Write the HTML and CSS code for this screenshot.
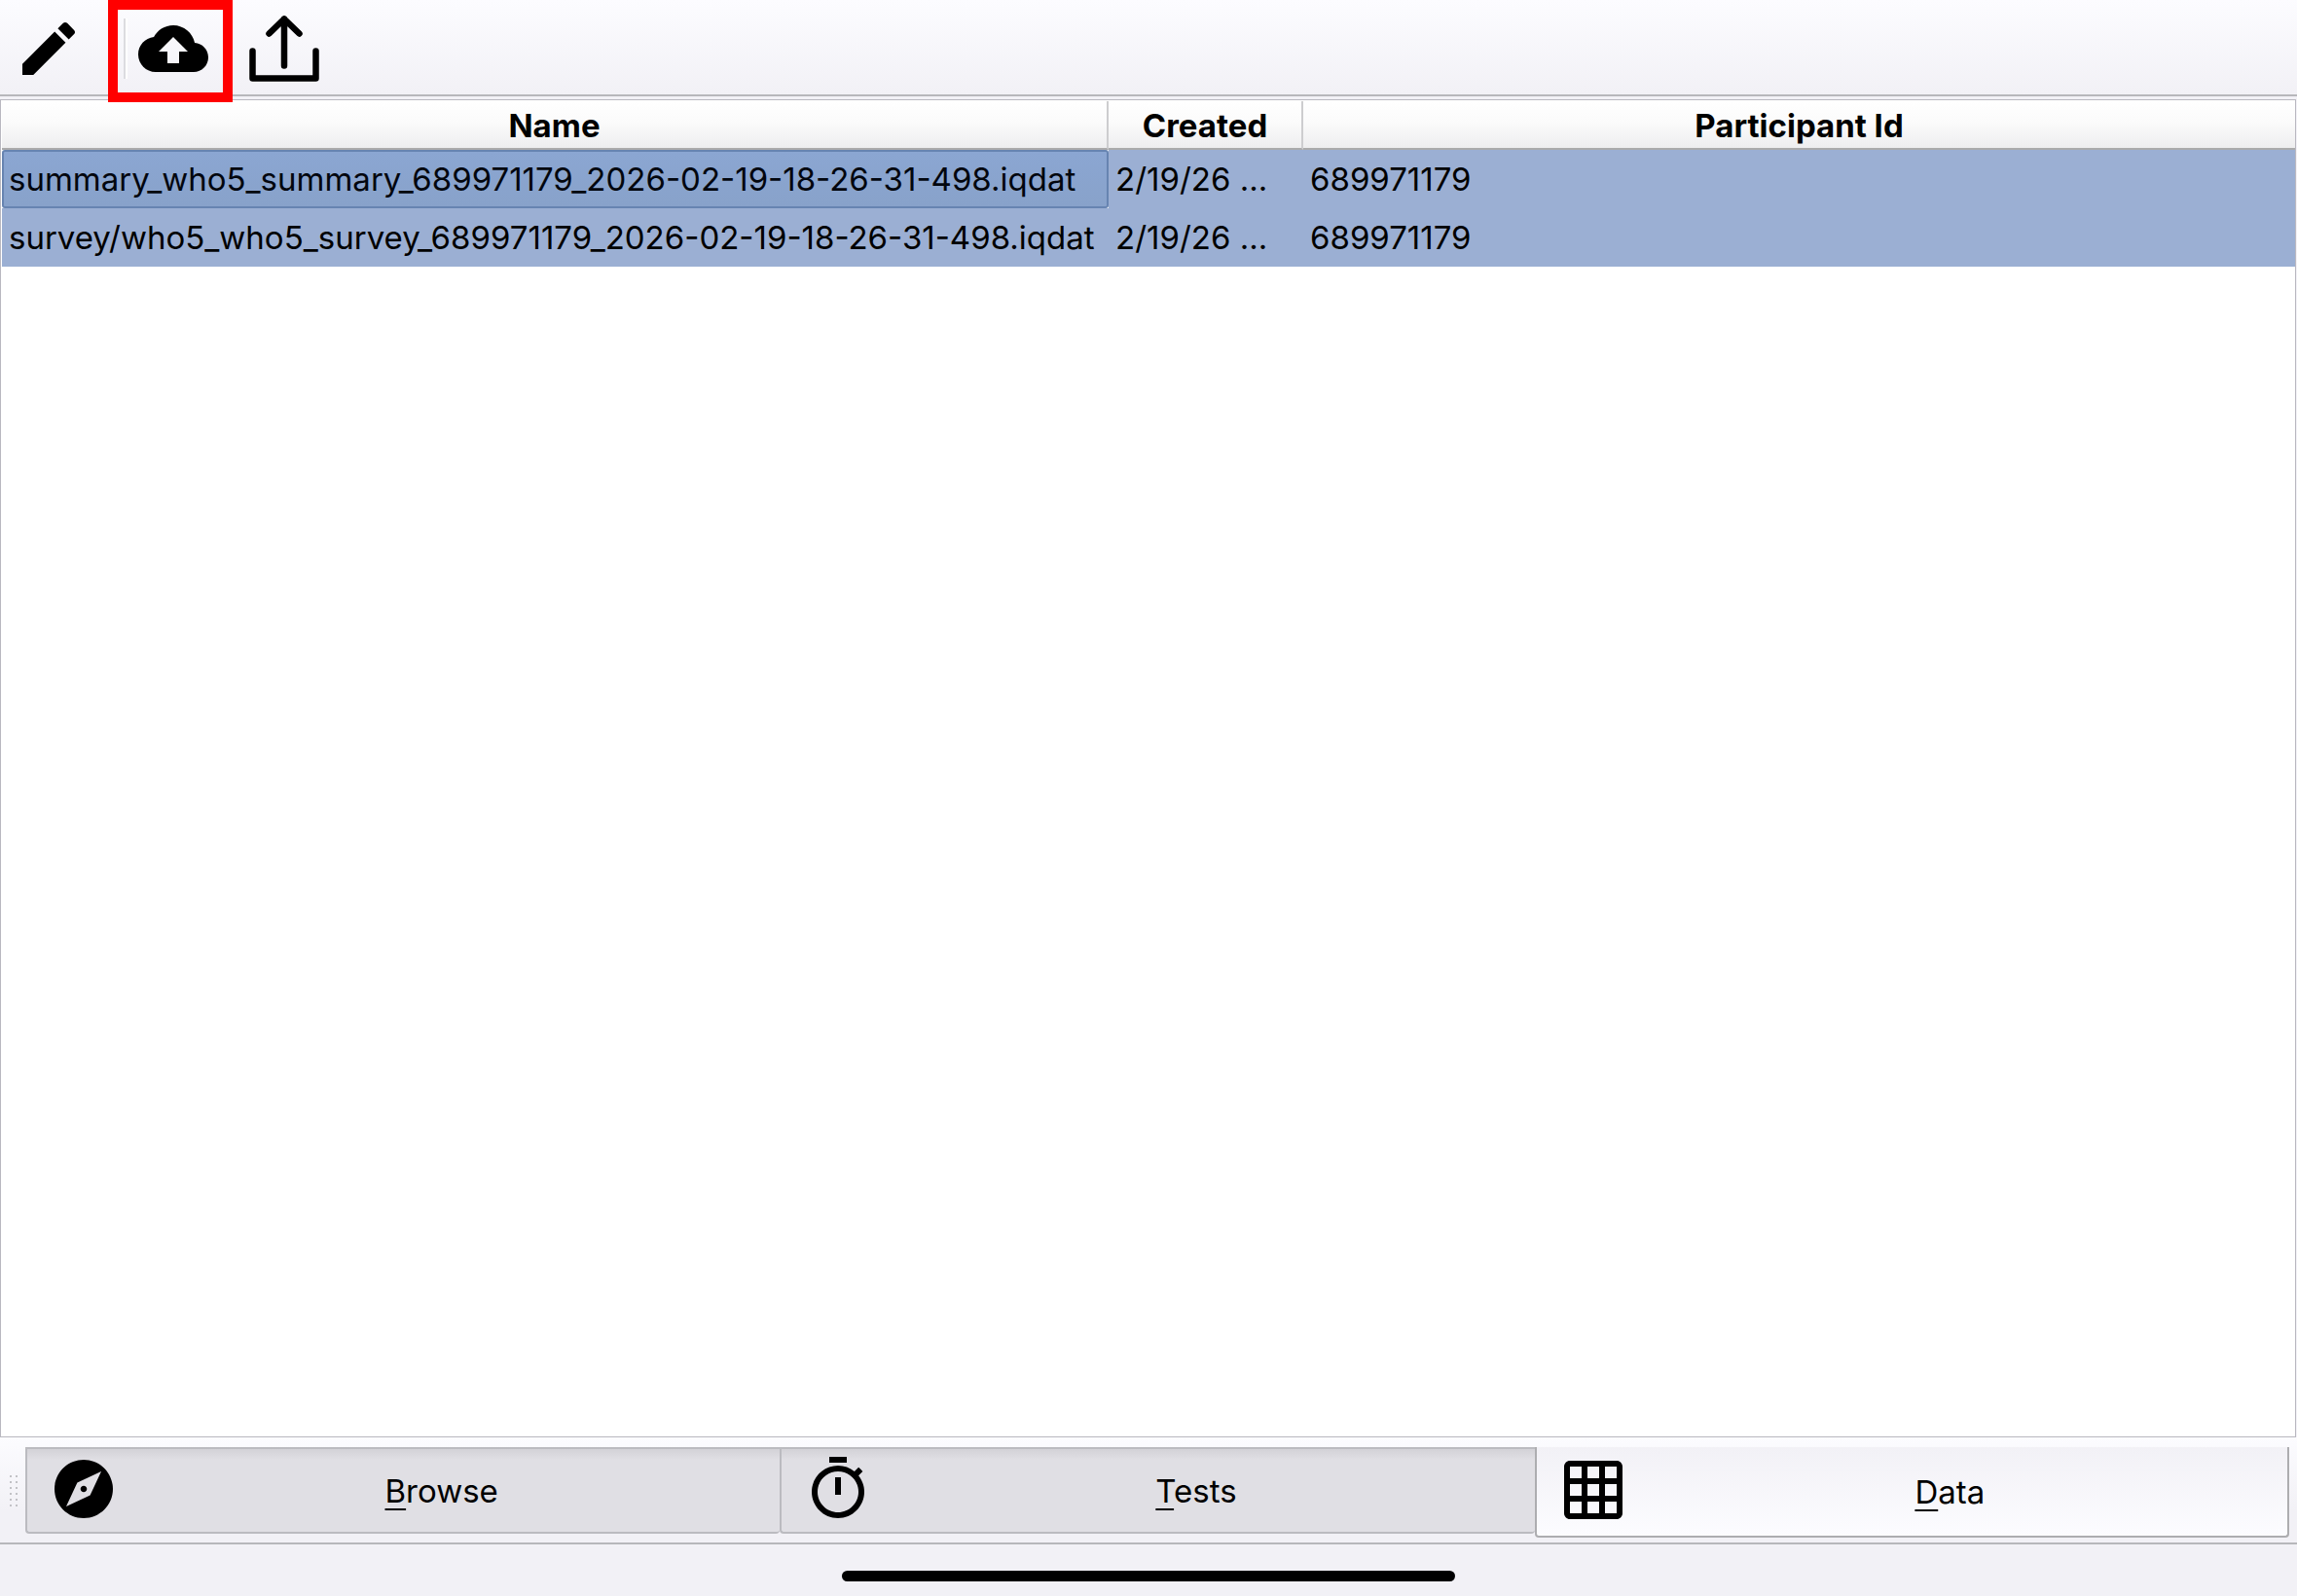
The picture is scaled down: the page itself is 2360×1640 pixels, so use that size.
FILE: index.html
```html
<!DOCTYPE html>
<html lang="en">
<head>
	<meta charset="UTF-8">
	<meta name="viewport" content="width=device-width, initial-scale=1.0">
	<link rel="stylesheet" href="styles.css">
	<title>Data</title>
</head>
<body>
	<header class="toolbar" role="toolbar" aria-label="Data actions">
		<button class="tool" type="button" aria-label="Edit">
			<svg class="icon" viewBox="0 0 24 24"><path d="M3 17.25V21h3.75L17.81 9.94l-3.75-3.75L3 17.25zM20.71 7.04c.39-.39.39-1.02 0-1.41l-2.34-2.34c-.39-.39-1.02-.39-1.41 0l-1.83 1.83 3.75 3.75 1.83-1.83z"/></svg>
		</button>
		<span class="separator"></span>
		<button class="tool marked" type="button" aria-label="Upload">
			<svg class="icon" viewBox="0 0 24 24"><path d="M19.35 10.04C18.67 6.59 15.64 4 12 4 9.11 4 6.6 5.64 5.35 8.04 2.34 8.36 0 10.91 0 14c0 3.31 2.69 6 6 6h13c2.76 0 5-2.24 5-5 0-2.64-2.05-4.78-4.65-4.96zM14 13v4h-4v-4H7l5-5 5 5h-3z"/></svg>
		</button>
		<button class="tool" type="button" aria-label="Share">
			<svg class="icon icon-line" viewBox="0 0 72 72"><path d="M3.5 38.5V66.5H68.500V38.5M36 53.500V5.5M20.5 20.5L36 5.5L51.5 20.5"/></svg>
		</button>
	</header>

	<main class="view">
		<table class="files">
			<colgroup>
				<col class="col-name">
				<col class="col-created">
				<col>
			</colgroup>
			<thead>
				<tr>
					<th scope="col">Name</th>
					<th scope="col">Created</th>
					<th scope="col">Participant Id</th>
				</tr>
			</thead>
			<tbody>
				<tr>
					<td class="current">summary_who5_summary_689971179_2026-02-19-18-26-31-498.iqdat</td>
					<td>2/19/26 ...</td>
					<td>689971179</td>
				</tr>
				<tr>
					<td>survey/who5_who5_survey_689971179_2026-02-19-18-26-31-498.iqdat</td>
					<td>2/19/26 ...</td>
					<td>689971179</td>
				</tr>
			</tbody>
		</table>
	</main>

	<nav class="tabbar">
		<span class="grip"></span>
		<div class="tabs" role="tablist">
			<button class="tab" type="button" role="tab" aria-selected="false">
				<svg class="icon" viewBox="0 0 24 24"><path d="M12 10.9c-.61 0-1.1.49-1.1 1.1s.49 1.1 1.1 1.1c.61 0 1.1-.49 1.1-1.1s-.49-1.1-1.1-1.1zM12 2C6.48 2 2 6.48 2 12s4.48 10 10 10 10-4.48 10-10S17.52 2 12 2zm2.19 12.19L6 18l3.81-8.19L18 6l-3.81 8.19z"/></svg>
				<span class="label"><u>B</u>rowse</span>
			</button>
			<button class="tab" type="button" role="tab" aria-selected="false">
				<svg class="icon" viewBox="0 0 24 24"><path d="M15 1H9v2h6V1zm-4 13h2V8h-2v6zm8.03-6.61l1.42-1.42c-.43-.51-.9-.99-1.41-1.41l-1.42 1.42C16.07 4.74 14.12 4 12 4c-4.97 0-9 4.03-9 9s4.02 9 9 9 9-4.03 9-9c0-2.12-.74-4.07-1.97-5.61zM12 20c-3.87 0-7-3.13-7-7s3.13-7 7-7 7 3.13 7 7-3.13 7-7 7z"/></svg>
				<span class="label"><u>T</u>ests</span>
			</button>
			<button class="tab" type="button" role="tab" aria-selected="true">
				<svg class="icon" viewBox="0 0 24 24"><path d="M20 2H4c-1.1 0-2 .9-2 2v16c0 1.1.9 2 2 2h16c1.1 0 2-.9 2-2V4c0-1.1-.9-2-2-2zM8 20H4v-4h4v4zm0-6H4v-4h4v4zm0-6H4V4h4v4zm6 12h-4v-4h4v4zm0-6h-4v-4h4v4zm0-6h-4V4h4v4zm6 12h-4v-4h4v4zm0-6h-4v-4h4v4zm0-6h-4V4h4v4z"/></svg>
				<span class="label"><u>D</u>ata</span>
			</button>
		</div>
	</nav>

	<footer class="home">
		<span class="home-bar"></span>
	</footer>
</body>
</html>
```

FILE: styles.css
```css
*, *::before {
  box-sizing: border-box;
}
body {
  display: flex;
  flex-direction: column;
  height: 100vh;
  margin: 0;
  background: #f2f1f6;
  color: #000;
  font: 400 33px/40px Inter, Roboto, sans-serif;
}
button {
  margin: 0;
  padding: 0;
  border: 0;
  background: none;
  color: inherit;
  font: inherit;
}
.icon {
  display: block;
  flex: none;
  width: 72px;
  height: 72px;
  fill: currentColor;
  overflow: visible;
}
.icon-line {
  fill: none;
  stroke: currentColor;
  stroke-width: 6.5;
  stroke-linecap: round;
  stroke-linejoin: round;
}

/* toolbar */
.toolbar {
  display: flex;
  align-items: center;
  flex: none;
  height: 99px;
  padding: 3px 0 0 14px;
  border-bottom: 2px solid #b7b7bb;
  background: linear-gradient(#fcfcff, #f2f1f6);
}
.tool + .tool {
  margin-left: 42px;
}
.separator {
  width: 4px;
  height: 62px;
  margin: 0 11px 0 41px;
  border-left: 2px solid #dcdce0;
  background: #fff;
}
.marked {
  position: relative;
}
.marked::before {
  position: absolute;
  top: -14px;
  left: -31px;
  width: 128px;
  height: 105px;
  border: 10px solid #f00;
  pointer-events: none;
  content: '';
}

/* file list */
.view {
  flex: 1;
  min-height: 0;
  margin: 3px 1px 0 0;
  border: 1px solid #b9b8c0;
  background: #fff;
  padding: 1px 0 0 1px;
}
.files {
  width: 100%;
  table-layout: fixed;
  border-spacing: 0;
}
.col-name {
  width: 1137px;
}
.col-created {
  width: 200px;
}
th, td {
  overflow: hidden;
  white-space: nowrap;
}
th {
  height: 50px;
  padding: 2px 0 0;
  border-right: 2px solid #cdcdcf;
  border-bottom: 2px solid #ababab;
  background: linear-gradient(#fff, #fbfbfb 45%, #eeeeef);
  font-weight: 700;
}
th:last-child {
  border-right: 0;
}
td {
  height: 60px;
  padding: 0 0 0 7px;
  background: #9bafd3;
}
.current {
  padding: 0 0 0 5px;
  border: 2px solid #6784b1;
  border-radius: 3px;
  background: linear-gradient(#8ba6d2, #88a2ca);
  color: #02060e;
}

/* tabs */
.tabbar {
  display: flex;
  flex: none;
  height: 110px;
  padding: 10px 8px 0 10px;
  border-bottom: 2px solid #b7b7bb;
  background: linear-gradient(#fcfcff, #f2f1f6 70%);
}
.grip {
  width: 8px;
  height: 32px;
  margin: 29px 8px 0 0;
  background: conic-gradient(from 270deg at 2px 2px, #c2c2c6 90deg, transparent 0) 0 0/6px 6px;
}
.tabs {
  display: flex;
  flex: 1;
  align-items: flex-start;
}
.tab {
  display: flex;
  flex: 1 1 33%;
  align-items: center;
  height: 89px;
  padding: 0 16px 0 22px;
  border: 2px solid #bbbbc0;
  border-right: 0;
  border-radius: 0 0 4px 4px;
  background: linear-gradient(#d3d2d7, #e0dfe4 11px);
}
.tab .icon {
  margin-bottom: 3px;
}
.tab[aria-selected='true'] {
  height: 93px;
  border: 2px solid #adadb0;
  border-top: 0;
  background: linear-gradient(#f2f1f6, #fcfcff);
}
.label {
  flex: 1;
  text-align: center;
}
.label u {
  text-decoration-thickness: 2px;
  text-underline-offset: 6px;
}

/* home indicator */
.home {
  display: flex;
  flex: none;
  align-items: flex-end;
  justify-content: center;
  height: 53px;
  padding-bottom: 15px;
}
.home-bar {
  width: 630px;
  height: 11px;
  border-radius: 6px;
  background: #000;
}
```
